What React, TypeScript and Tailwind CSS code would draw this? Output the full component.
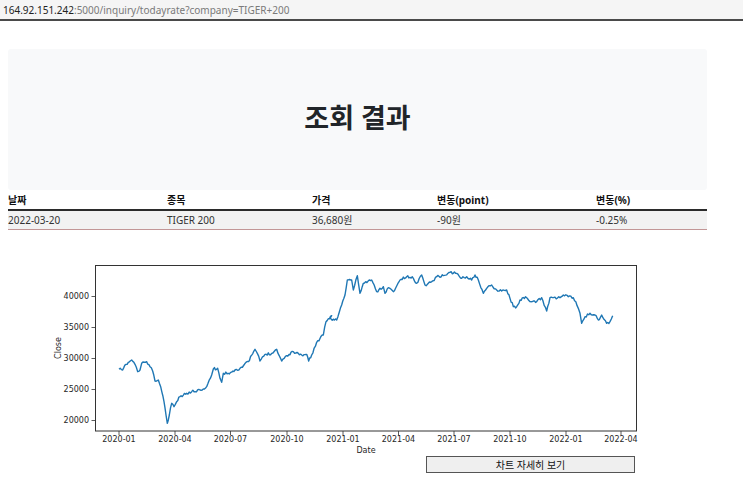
import React from 'react';

// close price trace, read off the reference (zoom coordinates -> page coordinates)
const leftPart: [number, number][] = [
  [237, 343], [248, 345], [258, 328], [275, 315], [285, 328], [293, 350], [300, 345], [305, 325],
  [320, 320], [330, 335], [338, 348], [345, 378], [355, 375], [362, 395], [372, 440], [378, 480],
  [382, 505], [388, 480], [395, 445], [402, 455], [410, 440], [420, 425], [440, 415], [455, 410],
  [480, 405], [500, 395], [515, 360], [520, 342], [533, 340], [540, 370], [545, 382], [550, 355],
  [565, 355], [585, 345], [600, 340], [625, 320], [645, 283], [652, 295], [660, 318], [675, 298],
  [695, 295], [710, 283], [725, 318], [740, 302], [760, 290], [775, 295], [785, 300], [800, 298],
  [806, 318], [815, 300], [830, 262], [850, 240], [858, 200], [875, 182],
];
const rightPart: [number, number][] = [
  [0, 190], [20, 195], [35, 150], [45, 120], [52, 75], [65, 75], [70, 105], [82, 62], [90, 115],
  [100, 85], [125, 75], [140, 110], [160, 95], [165, 115], [175, 98], [190, 110], [210, 75],
  [230, 65], [250, 70], [260, 85], [275, 60], [285, 90], [305, 80], [320, 65], [340, 62],
  [360, 52], [380, 55], [395, 70], [410, 65], [425, 75], [435, 60], [445, 75], [460, 115],
  [470, 100], [485, 90], [500, 105], [530, 105], [540, 130], [550, 155], [560, 155], [570, 135],
  [590, 128], [600, 140], [620, 140], [635, 128], [650, 168], [660, 128], [690, 128], [700, 120],
  [715, 125], [730, 128], [745, 160], [750, 175], [755, 205], [765, 185], [780, 175], [795, 180],
  [805, 195], [815, 180], [830, 205], [840, 200], [848, 182],
];

const keys: [number, number][] = [
  ...leftPart.map(([x, y]) => [40 + x / 3, 255 + y / 3] as [number, number]),
  ...rightPart.map(([x, y]) => [330 + x / 3, 255 + y / 3] as [number, number]),
];

function buildPath() {
  let seed = 11;
  const rand = () => {
    seed = (seed * 16807) % 2147483647;
    return seed / 2147483647;
  };
  const pts: string[] = [];
  for (let i = 0; i < keys.length - 1; i++) {
    const [x0, y0] = keys[i];
    const [x1, y1] = keys[i + 1];
    const n = Math.max(1, Math.round(Math.abs(x1 - x0) / 1.2));
    for (let j = 0; j < n; j++) {
      const t = j / n;
      const jitter = j === 0 ? 0 : (rand() - 0.5) * 2.6;
      pts.push(`${(x0 + (x1 - x0) * t).toFixed(2)},${(y0 + (y1 - y0) * t + jitter).toFixed(2)}`);
    }
  }
  const last = keys[keys.length - 1];
  pts.push(`${last[0]},${last[1]}`);
  return 'M' + pts.join(' L');
}

const linePath = buildPath();

const yTicks = [
  { label: '40000', y: 296 },
  { label: '35000', y: 327 },
  { label: '30000', y: 358 },
  { label: '25000', y: 389 },
  { label: '20000', y: 420 },
];

const xTicks = [
  { label: '2020-01', x: 119 },
  { label: '2020-04', x: 175 },
  { label: '2020-07', x: 230.5 },
  { label: '2020-10', x: 287 },
  { label: '2021-01', x: 343 },
  { label: '2021-04', x: 398.5 },
  { label: '2021-07', x: 454 },
  { label: '2021-10', x: 510 },
  { label: '2022-01', x: 566 },
  { label: '2022-04', x: 621 },
];

const PriceChart: React.FC = () => (
  <svg width="610" height="225" viewBox="40 230 610 225" className="block ml-[40px]">
    <rect x="95.5" y="265.5" width="541" height="165.5" fill="white" stroke="#333" strokeWidth="1" />
    <path d={linePath} fill="none" stroke="#1f77b4" strokeWidth="1.4" strokeLinejoin="round" />
    <g fontFamily="'DejaVu Sans', sans-serif" fontSize="8" fill="#262626">
      {yTicks.map((t) => (
        <g key={t.label}>
          <line x1="91.5" x2="95.5" y1={t.y + 0.5} y2={t.y + 0.5} stroke="#333" strokeWidth="0.8" />
          <text x="89" y={t.y + 3} textAnchor="end">{t.label}</text>
        </g>
      ))}
      {xTicks.map((t) => (
        <g key={t.label}>
          <line x1={t.x} x2={t.x} y1="431" y2="435" stroke="#333" strokeWidth="0.8" />
          <text x={t.x} y="442" textAnchor="middle">{t.label}</text>
        </g>
      ))}
      <text x="366" y="453" textAnchor="middle">Date</text>
      <text x="0" y="0" textAnchor="middle" transform="translate(61 348) rotate(-90)">Close</text>
    </g>
  </svg>
);

const cols = ['w-[159px]', 'w-[145px]', 'w-[125px]', 'w-[159px]', 'w-[111px]'];
const head = ['날짜', '종목', '가격', '변동(point)', '변동(%)'];
const row = ['2022-03-20', 'TIGER 200', '36,680원', '-90원', '-0.25%'];

export default function App() {
  return (
    <div
      className="w-[743px] h-[482px] bg-white overflow-hidden text-[#212529]"
      style={{ fontFamily: "'Noto Sans', 'Noto Sans CJK KR', sans-serif" }}
    >
      {/* address bar */}
      <div className="h-[21px] bg-[#f5f5f5] border-b-2 border-[#4a4a4a] flex items-center pl-[3px] text-[10px] leading-none">
        <span className="text-[#222]">164.92.151.242</span>
        <span className="text-[#7a7a7a]">:5000/inquiry/todayrate?company=TIGER+200</span>
      </div>

      <div className="px-[8px] pt-[28px]">
        <div className="w-[699px] h-[141px] bg-[#f8f9fa] rounded-[3px] flex items-center justify-center">
          <h1 className="text-[27px] font-bold text-[#212529] leading-none pb-[4px]">조회 결과</h1>
        </div>

        <div className="w-[699px] text-[10px]">
          <div className="flex h-[21px] items-end pb-[1px] border-b-2 border-[#2b2b2b] font-bold text-[#111]">
            {head.map((h, i) => (
              <div key={h} className={cols[i]}>{h}</div>
            ))}
          </div>
          <div className="flex h-[19px] items-center bg-[#f2f2f2] border-b border-[#c29696] text-[#333]">
            {row.map((c, i) => (
              <div key={c} className={cols[i]}>{c}</div>
            ))}
          </div>
        </div>
      </div>

      <PriceChart />

      <button className="block ml-[426px] mt-[1px] w-[209px] h-[17px] bg-[#efefef] border border-[#555] text-[10px] leading-none text-[#111]">
        차트 자세히 보기
      </button>
    </div>
  );
}
